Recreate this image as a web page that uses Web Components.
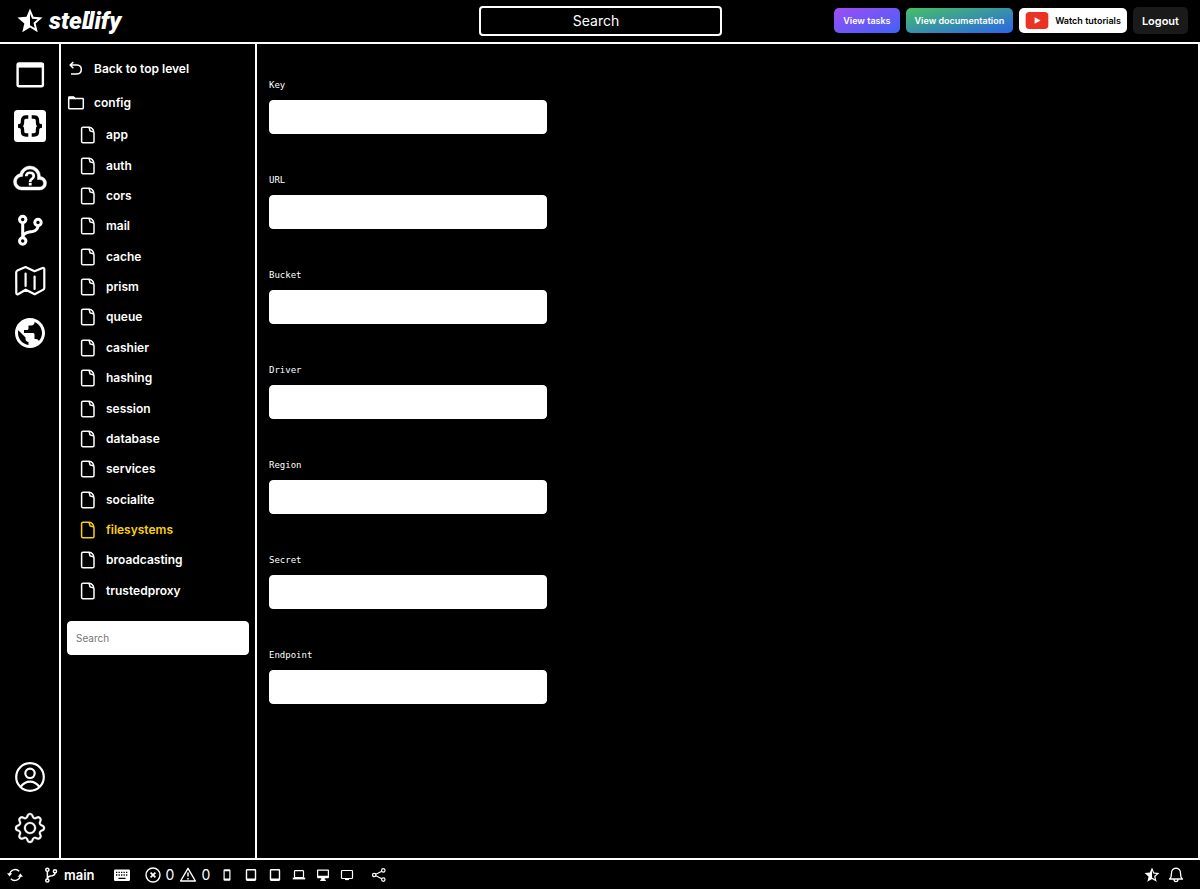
<!DOCTYPE html>
<html lang="en">
<head>
<meta charset="utf-8">
<meta name="viewport" content="width=device-width, initial-scale=1">
<title>Stellify – filesystems</title>
<style>
  body {
    margin: 0;
    background: #000;
    color: #fff;
    font-family: Inter, "Liberation Sans", sans-serif;
    --line: #fff;
    --accent: #fcd00c;
  }
</style>
</head>
<body>
<st-app></st-app>

<script>
const ICONS = {
  star: ['0 0 24 24', '<path fill="currentColor" d="M12 15.4V6.1l1.71 4.04 4.38.38-3.32 2.88 1 4.28M22 9.24l-7.19-.61L12 2 9.19 8.63 2 9.24l5.45 4.73L5.82 21 12 17.27 18.18 21l-1.64-7.03z"/>'],
  app: ['0 0 36 36', '<rect x="5.600" y="6.500" width="25.300" height="22.700" rx="1.500" fill="none" stroke="currentColor" stroke-width="2.400"/><path fill="currentColor" d="M5 6h26.500v4.600H5z"/>'],
  braces: ['0 0 36 36', '<rect x="2" y="2" width="32" height="32" rx="3.500" fill="currentColor"/><path fill="none" stroke="#000" stroke-width="3.400" d="M16.300 9H14q-3.500 0-3.500 3.500v2Q10.500 18 6 18q4.500 0 4.500 3.500v2q0 3.500 3.500 3.500H16.300M19.700 9h2.300q3.500 0 3.500 3.500v2q0 3.500 4.500 3.500-4.500 0-4.500 3.500v2q0 3.500-3.500 3.500H19.700"/>'],
  cloud: ['0 0 24 24', '<path fill="currentColor" stroke="currentColor" stroke-width=".3" d="M6.500 20q-2.280 0-3.890-1.570Q1 16.850 1 14.580q0-1.950 1.170-3.480 1.180-1.530 3.080-1.950.63-2.300 2.500-3.720Q9.630 4 12 4q2.930 0 4.960 2.040Q19 8.070 19 11q1.730.2 2.860 1.500 1.140 1.280 1.140 3 0 1.880-1.310 3.190T18.500 20zm0-2h12q1.050 0 1.770-.73.73-.72.73-1.770t-.73-1.770Q19.550 13 18.500 13H17v-2q0-2.070-1.460-3.540Q14.080 6 12 6 9.930 6 8.460 7.460 7 8.930 7 11h-.5q-1.450 0-2.470 1.030Q3 13.050 3 14.500q0 1.450 1.030 2.500 1.020 1 2.470 1z"/><path fill="none" stroke="currentColor" stroke-width="1.800" d="M9.500 10.900q0-2.400 2.500-2.400t2.500 2.200q0 1.100-1.200 1.900-1.200.7-1.200 2"/><path fill="currentColor" d="M11.200 15.200h1.900v1.800h-1.900z"/>'],
  branch: ['0 0 36 36', '<g fill="none" stroke="currentColor" stroke-width="3"><circle cx="10.700" cy="7.500" r="3.200"/><circle cx="26" cy="10.500" r="3.200"/><circle cx="10.700" cy="29" r="3.200"/><path d="M10.700 10.500V26M26 13.500q0 5-5.500 6-3.500.4-6.500 1.500-3.300 1.500-3.300 5"/></g>'],
  map: ['0 0 36 36', '<path fill="none" stroke="currentColor" stroke-width="2.200" stroke-linejoin="round" stroke-linecap="round" d="M4.200 9.500q0-1.300 1.100-1.900L13.500 4l9 4.200L30.500 5q1.700-.5 1.800 1.300v18.500q0 1.300-1 1.800l-8.600 4.600-9-4.500L6 31.200q-1.600.6-1.700-1.200zM13.600 10.500v12.500M22.600 13.500v12.500"/>'],
  globe: ['0 0 24 24', '<path fill="currentColor" d="M12 2C6.480 2 2 6.480 2 12s4.480 10 10 10 10-4.480 10-10S17.520 2 12 2zm-1 17.930c-3.950-.49-7-3.850-7-7.930 0-.62.08-1.210.21-1.790L9 15v1c0 1.100.9 2 2 2v1.930zm6.900-2.540c-.26-.81-1-1.390-1.900-1.390h-1v-3c0-.55-.45-1-1-1H8v-2h2c.55 0 1-.45 1-1V7h2c1.100 0 2-.9 2-2v-.41c2.930 1.190 5 4.060 5 7.410 0 2.080-.8 3.970-2.100 5.390z"/>'],
  user: ['0 0 36 36', '<g fill="none" stroke="currentColor" stroke-width="2.200"><circle cx="18" cy="18" r="13.800"/><circle cx="18" cy="14.300" r="4.700"/><path d="M8.500 28q4-5.300 9.500-5.300t9.500 5.300"/></g>'],
  cog: ['-1.600 -1.600 19.200 19.200', '<g fill="currentColor" stroke="currentColor" stroke-width=".15"><path d="M8 4.754a3.246 3.246 0 1 0 0 6.492 3.246 3.246 0 0 0 0-6.492M5.754 8a2.246 2.246 0 1 1 4.492 0 2.246 2.246 0 0 1-4.492 0"/><path d="M9.796 1.343c-.527-1.790-3.065-1.790-3.592 0l-.094.319a.873.873 0 0 1-1.255.52l-.292-.16c-1.640-.892-3.433.902-2.540 2.541l.159.292a.873.873 0 0 1-.52 1.255l-.319.094c-1.790.527-1.790 3.065 0 3.592l.319.094a.873.873 0 0 1 .52 1.255l-.16.292c-.892 1.640.901 3.434 2.541 2.540l.292-.159a.873.873 0 0 1 1.255.52l.094.319c.527 1.790 3.065 1.790 3.592 0l.094-.319a.873.873 0 0 1 1.255-.52l.292.16c1.640.893 3.434-.902 2.540-2.541l-.159-.292a.873.873 0 0 1 .52-1.255l.319-.094c1.790-.527 1.790-3.065 0-3.592l-.319-.094a.873.873 0 0 1-.52-1.255l.16-.292c.893-1.640-.902-3.433-2.541-2.540l-.292.159a.873.873 0 0 1-1.255-.52zm-2.633.283c.246-.835 1.428-.835 1.674 0l.094.319a1.873 1.873 0 0 0 2.693 1.115l.291-.16c.764-.415 1.600.42 1.184 1.185l-.159.292a1.873 1.873 0 0 0 1.116 2.692l.318.094c.835.246.835 1.428 0 1.674l-.319.094a1.873 1.873 0 0 0-1.115 2.693l.16.291c.415.764-.42 1.600-1.185 1.184l-.291-.159a1.873 1.873 0 0 0-2.693 1.116l-.094.318c-.246.835-1.428.835-1.674 0l-.094-.319a1.873 1.873 0 0 0-2.692-1.115l-.292.16c-.764.415-1.600-.42-1.184-1.185l.159-.291A1.873 1.873 0 0 0 1.945 8.930l-.319-.094c-.835-.246-.835-1.428 0-1.674l.319-.094A1.873 1.873 0 0 0 3.060 4.377l-.16-.292c-.415-.764.42-1.600 1.185-1.184l.292.159a1.873 1.873 0 0 0 2.692-1.115z"/></g>'],
  back: ['0 0 18 18', '<path fill="none" stroke="currentColor" stroke-width="1.500" d="M6.300 2 3.200 5.100l3.100 3.100M3.500 5.100h6.500q4.300.3 4.300 4.400t-4.300 4.500H4"/>'],
  folder: ['0 0 18 18', '<path fill="none" stroke="currentColor" stroke-width="1.500" stroke-linejoin="round" d="M1.700 14V3.700q0-.7.7-.7h4.200l1.600 1.500h7.400q.7 0 .7.700v8.800q0 .7-.7.700H2.400q-.7 0-.7-.7z"/><path fill="currentColor" d="M2 2.800h4.800L8.400 4.500v.7H2z"/>'],
  file: ['0 0 18 18', '<path fill="none" stroke="currentColor" stroke-width="1.500" stroke-linejoin="round" d="M4 1.200h6.200q2 0 3 1.400 1.800 2 1.800 4.400v8.400q0 1.400-1.400 1.400H4q-1.400 0-1.400-1.400V2.600Q2.600 1.200 4 1.200zM9.600 1.500q1.200.5 1.100 2.300 0 1.500 1.500 1.500 2.200 0 2.500 1.400"/>'],
  sync: ['0 0 18 18', '<path fill="none" stroke="currentColor" stroke-width="1.300" d="M3.600 8.500a5.600 5.600 0 0 1 9.600-3.200M14.400 9.500a5.600 5.600 0 0 1-9.600 3.200"/><path fill="currentColor" d="M1 7.200h5.200L3.600 10.400zM11.800 10.800H17L14.400 7.600z"/>'],
  keyboard: ['0 0 18 18', '<rect x="1" y="3.500" width="16" height="11.500" rx="1.300" fill="currentColor"/><path stroke="#000" stroke-width="1.300" fill="none" d="M3 6.300h1.300m1.200 0h1.300m1.200 0h1.300m1.200 0h1.300m1.200 0h1.300M3 9h1.300m1.200 0h1.300m1.200 0h1.300m1.200 0h1.300m1.200 0h1.300M5.500 12.300h7"/>'],
  error: ['0 0 18 18', '<g fill="none" stroke="currentColor"><circle cx="9" cy="9" r="7" stroke-width="1.400"/><path stroke-width="1.700" d="m6.600 6.600 4.800 4.800m0-4.800-4.800 4.800"/></g>'],
  warning: ['0 0 18 18', '<g fill="none" stroke="currentColor"><path stroke-width="1.400" stroke-linejoin="round" d="M9 2.300 16.400 15H1.600z"/><path stroke-width="1.500" d="M9 6.600v4M9 11.900v1.500"/></g>'],
  phone: ['0 0 18 18', '<path fill="currentColor" fill-rule="evenodd" d="M6.700 3.200h4.600q1.200 0 1.200 1.200v9.200q0 1.200-1.200 1.200H6.700q-1.200 0-1.200-1.200V4.400q0-1.200 1.200-1.200zM6.700 5.200v7.300h4.600V5.200z"/>'],
  tablet: ['0 0 18 18', '<path fill="currentColor" fill-rule="evenodd" d="M5.200 3h7.600q1.400 0 1.400 1.400v9.200q0 1.400-1.400 1.400H5.200q-1.400 0-1.400-1.400V4.400Q3.800 3 5.200 3zM5.200 4.600v7.800h7.600V4.600z"/>'],
  laptop: ['0 0 18 18', '<rect x="4.500" y="4.600" width="9" height="7" rx=".8" fill="none" stroke="currentColor" stroke-width="1.200"/><path fill="currentColor" d="M2.800 11.600h12.400v1.800H2.800z"/>'],
  desktop: ['0 0 18 18', '<path fill="currentColor" fill-rule="evenodd" d="M4 3.600h10q1 0 1 1v6.600q0 1-1 1h-3.200v1.600h1v1.200H6.200v-1.200h1v-1.600H4q-1 0-1-1V4.600q0-1 1-1zM4.200 4.800v5h9.600v-5z"/>'],
  screen: ['0 0 18 18', '<rect x="3.500" y="4.500" width="11" height="8" rx=".8" fill="none" stroke="currentColor" stroke-width="1.200"/><path fill="currentColor" d="M7 12.500h4v1.600H7z"/>'],
  share: ['0 0 18 18', '<g fill="none" stroke="currentColor" stroke-width="1.200"><circle cx="4.200" cy="9" r="1.700"/><circle cx="13.300" cy="4.400" r="1.700"/><circle cx="13.300" cy="13.600" r="1.700"/><path d="m5.800 8.200 6-3M5.800 9.800l6 3"/></g>'],
  bell: ['0 0 18 18', '<path fill="none" stroke="currentColor" stroke-width="1.300" stroke-linejoin="round" d="M9 2.200q4.500.5 4.500 5 0 4.300 2 5.800h-13q2-1.500 2-5.800 0-4.500 4.500-5zM7 13.300q0 2.300 2 2.300t2-2.300"/>'],
  youtube: ['0 0 24 18', '<rect width="24" height="18" rx="4" fill="#ea3323"/><path fill="#fff" d="M9.500 5.600v6.800l6.300-3.400z"/>']
};

function define(tag, markup, setup) {
  const template = document.createElement('template');
  template.innerHTML = markup;
  customElements.define(tag, class extends HTMLElement {
    constructor() {
      super();
      this.attachShadow({ mode: 'open' }).append(template.content.cloneNode(true));
    }
    connectedCallback() {
      if (setup) setup(this, this.shadowRoot);
    }
  });
}

/* Icon sized by --size, with --size-y for wide art */
define('st-icon', `
  <style>
    :host { display: block; flex: none; width: var(--size, 18px); height: var(--size-y, var(--size, 18px)); }
    svg { display: block; width: 100%; height: 100%; }
  </style>
  <svg aria-hidden="true"></svg>`, (host, root) => {
  const [box, art] = ICONS[host.getAttribute('name')];
  const svg = root.querySelector('svg');
  svg.setAttribute('viewBox', box);
  svg.innerHTML = art;
});

/* The two bars over the wordmark tie its double l into one shape */
define('st-logo', `
  <style>
    :host { display: block; }
    a { display: flex; align-items: center; gap: 4px; width: max-content; color: inherit; text-decoration: none; }
    st-icon { --size: 30px; }
    span { position: relative; font: italic 900 24px/30px Roboto, sans-serif; }
    span::before, span::after { content: ""; position: absolute; height: 3px; background: currentColor; }
    span::before { left: 36px; top: 5px; width: 5px; }
    span::after { left: 36px; top: 20px; width: 7px; }
  </style>
  <a href="#"><st-icon name="star"></st-icon><span>stellify</span></a>`);

/* Header pill button; variant chooses the fill */
define('st-button', `
  <style>
    :host { display: block; flex: none; }
    button {
      display: flex; align-items: center; gap: 6px; box-sizing: border-box;
      height: 25px; padding: 0 9px; border: 0; border-radius: 5px;
      color: #fff; font: 600 9px/12px Inter, sans-serif; white-space: nowrap; cursor: pointer;
    }
    :host([variant="tasks"]) button { background: linear-gradient(to bottom right, #a04cf6, #3f63f5); }
    :host([variant="docs"]) button { background: linear-gradient(to bottom right, #46c163, #2a64ea); }
    :host([variant="video"]) button { background: #fff; color: #000; padding: 0 6px; }
    :host([variant="plain"]) button { background: #1a1a1a; height: 27px; font-size: 11px; }
  </style>
  <button type="button"><slot name="icon"></slot><slot></slot></button>`);

define('st-header', `
  <style>
    :host {
      display: grid; grid-template-columns: 1fr 243px 1fr; align-items: center; column-gap: 12px;
      box-sizing: border-box; height: 44px; padding: 0 12px 1px; border-bottom: 2px solid var(--line);
    }
    st-logo { padding-left: 3px; }
    input {
      box-sizing: border-box; width: 100%; height: 30px; padding: 0 20px 0 12px;
      border: 2px solid #fff; border-radius: 4px; background: #000; color: #fff;
      font: 400 14px/20px Inter, sans-serif; text-align: center;
    }
    input::placeholder { color: #fff; opacity: 1; }
    nav { display: flex; justify-content: flex-end; align-items: center; gap: 6px; }
    st-icon { --size: 24px; --size-y: 17px; }
  </style>
  <st-logo></st-logo>
  <input type="text" placeholder="Search" aria-label="Search everything">
  <nav>
    <st-button variant="tasks">View tasks</st-button>
    <st-button variant="docs">View documentation</st-button>
    <st-button variant="video"><st-icon slot="icon" name="youtube"></st-icon>Watch tutorials</st-button>
    <st-button variant="plain">Logout</st-button>
  </nav>`);

define('st-rail', `
  <style>
    :host {
      display: flex; flex-direction: column; justify-content: space-between; flex: none;
      box-sizing: border-box; width: 61px; padding: 5px 0 4px; border-right: 2px solid var(--line);
    }
    div { display: grid; grid-auto-rows: 1fr; justify-items: center; }
    .tools { min-height: 310px; }
    .account { min-height: 103px; }
    button { display: grid; place-items: center; padding: 0; border: 0; background: none; color: inherit; cursor: pointer; }
    st-icon { --size: 36px; }
  </style>
  <div class="tools">
    <button type="button" aria-label="Pages"><st-icon name="app"></st-icon></button>
    <button type="button" aria-label="Code"><st-icon name="braces"></st-icon></button>
    <button type="button" aria-label="Cloud help"><st-icon name="cloud"></st-icon></button>
    <button type="button" aria-label="Source control"><st-icon name="branch"></st-icon></button>
    <button type="button" aria-label="Map"><st-icon name="map"></st-icon></button>
    <button type="button" aria-label="Public"><st-icon name="globe"></st-icon></button>
  </div>
  <div class="account">
    <button type="button" aria-label="Account"><st-icon name="user"></st-icon></button>
    <button type="button" aria-label="Settings"><st-icon name="cog"></st-icon></button>
  </div>`);

define('st-tree-item', `
  <style>
    :host { display: flex; align-items: center; }
    a { display: flex; align-items: center; gap: 9px; color: inherit; text-decoration: none; font: 600 12px/18px Inter, sans-serif; }
    :host([current]) a { color: var(--accent); }
  </style>
  <a href="#"><slot></slot></a>`, (host, root) => {
  const icon = document.createElement('st-icon');
  icon.setAttribute('name', host.getAttribute('icon') || 'file');
  root.querySelector('a').prepend(icon);
});

define('st-sidebar', `
  <style>
    :host {
      display: block; flex: none; box-sizing: border-box; width: 196px;
      padding: 8px 6px; border-right: 2px solid var(--line);
    }
    .top { display: grid; grid-auto-rows: 34px; }
    .files { display: grid; grid-auto-rows: 1fr; min-height: 486px; padding-left: 12px; }
    input {
      display: block; box-sizing: border-box; width: 100%; height: 34px; margin-top: 15px; padding: 0 8px;
      border: 1px solid #fff; border-radius: 4px; background: #fff; color: #000; font: 400 10px/16px Inter, sans-serif;
    }
    input::placeholder { color: #757575; opacity: 1; }
  </style>
  <div class="top">
    <st-tree-item icon="back">Back to top level</st-tree-item>
    <st-tree-item icon="folder">config</st-tree-item>
  </div>
  <div class="files"></div>
  <input type="search" placeholder="Search" aria-label="Search files">`, (host, root) => {
  const files = ['app', 'auth', 'cors', 'mail', 'cache', 'prism', 'queue', 'cashier', 'hashing', 'session',
    'database', 'services', 'socialite', 'filesystems', 'broadcasting', 'trustedproxy'];
  root.querySelector('.files').append(...files.map(name => {
    const item = document.createElement('st-tree-item');
    item.textContent = name;
    item.toggleAttribute('current', name === 'filesystems');
    return item;
  }));
});

define('st-field', `
  <style>
    :host { display: block; }
    label { display: block; font: 400 9px/12px "DejaVu Sans Mono", monospace; margin-bottom: 9px; }
    input {
      display: block; box-sizing: border-box; width: 100%; max-width: 278px; height: 34px; padding: 0 9px;
      border: 1px solid #fff; border-radius: 4px; background: #fff; color: #000; font: 400 12px/16px Inter, sans-serif;
    }
  </style>
  <label for="value"><slot></slot></label>
  <input id="value" type="text">`);

define('st-form', `
  <style>
    :host { display: block; flex: 1; box-sizing: border-box; min-width: 0; padding: 35px 12px; border-right: 2px solid var(--line); }
    form { display: grid; gap: 40px; }
  </style>
  <form>
    <st-field>Key</st-field>
    <st-field>URL</st-field>
    <st-field>Bucket</st-field>
    <st-field>Driver</st-field>
    <st-field>Region</st-field>
    <st-field>Secret</st-field>
    <st-field>Endpoint</st-field>
  </form>`);

define('st-status', `
  <style>
    :host {
      display: flex; align-items: center; justify-content: space-between;
      box-sizing: border-box; height: 31px; padding: 0 15px 0 6px; border-top: 2px solid var(--line);
      font: 400 14px/18px Inter, sans-serif;
    }
    div { display: flex; align-items: center; }
    button { display: flex; align-items: center; gap: 4px; padding: 0; border: 0; background: none; color: inherit; font: inherit; cursor: pointer; }
    .state { gap: 18px; }
    .branch { font-weight: 600; font-size: 13px; }
    .problems { gap: 5px; margin-left: 13px; }
    .devices { gap: 6px; margin-left: 8px; }
    .share { margin-left: 14px; }
    .right { gap: 6px; }
  </style>
  <div>
    <div class="state">
      <button type="button" aria-label="Sync"><st-icon name="sync"></st-icon></button>
      <button type="button" class="branch"><st-icon name="branch"></st-icon>main</button>
      <button type="button" aria-label="Keyboard"><st-icon name="keyboard"></st-icon></button>
    </div>
    <div class="problems">
      <button type="button"><st-icon name="error"></st-icon>0</button>
      <button type="button"><st-icon name="warning"></st-icon>0</button>
    </div>
    <div class="devices">
      <button type="button" aria-label="Phone"><st-icon name="phone"></st-icon></button>
      <button type="button" aria-label="Small tablet"><st-icon name="tablet"></st-icon></button>
      <button type="button" aria-label="Tablet"><st-icon name="tablet"></st-icon></button>
      <button type="button" aria-label="Laptop"><st-icon name="laptop"></st-icon></button>
      <button type="button" aria-label="Desktop"><st-icon name="desktop"></st-icon></button>
      <button type="button" aria-label="Large screen"><st-icon name="screen"></st-icon></button>
    </div>
    <button class="share" type="button" aria-label="Share"><st-icon name="share"></st-icon></button>
  </div>
  <div class="right">
    <button type="button" aria-label="Favourite"><st-icon name="star"></st-icon></button>
    <button type="button" aria-label="Notifications"><st-icon name="bell"></st-icon></button>
  </div>`);

define('st-app', `
  <style>
    :host { display: flex; flex-direction: column; min-height: 100vh; }
    main { display: flex; flex: 1; }
  </style>
  <st-header></st-header>
  <main>
    <st-rail></st-rail>
    <st-sidebar></st-sidebar>
    <st-form></st-form>
  </main>
  <st-status></st-status>`);
</script>
</body>
</html>
